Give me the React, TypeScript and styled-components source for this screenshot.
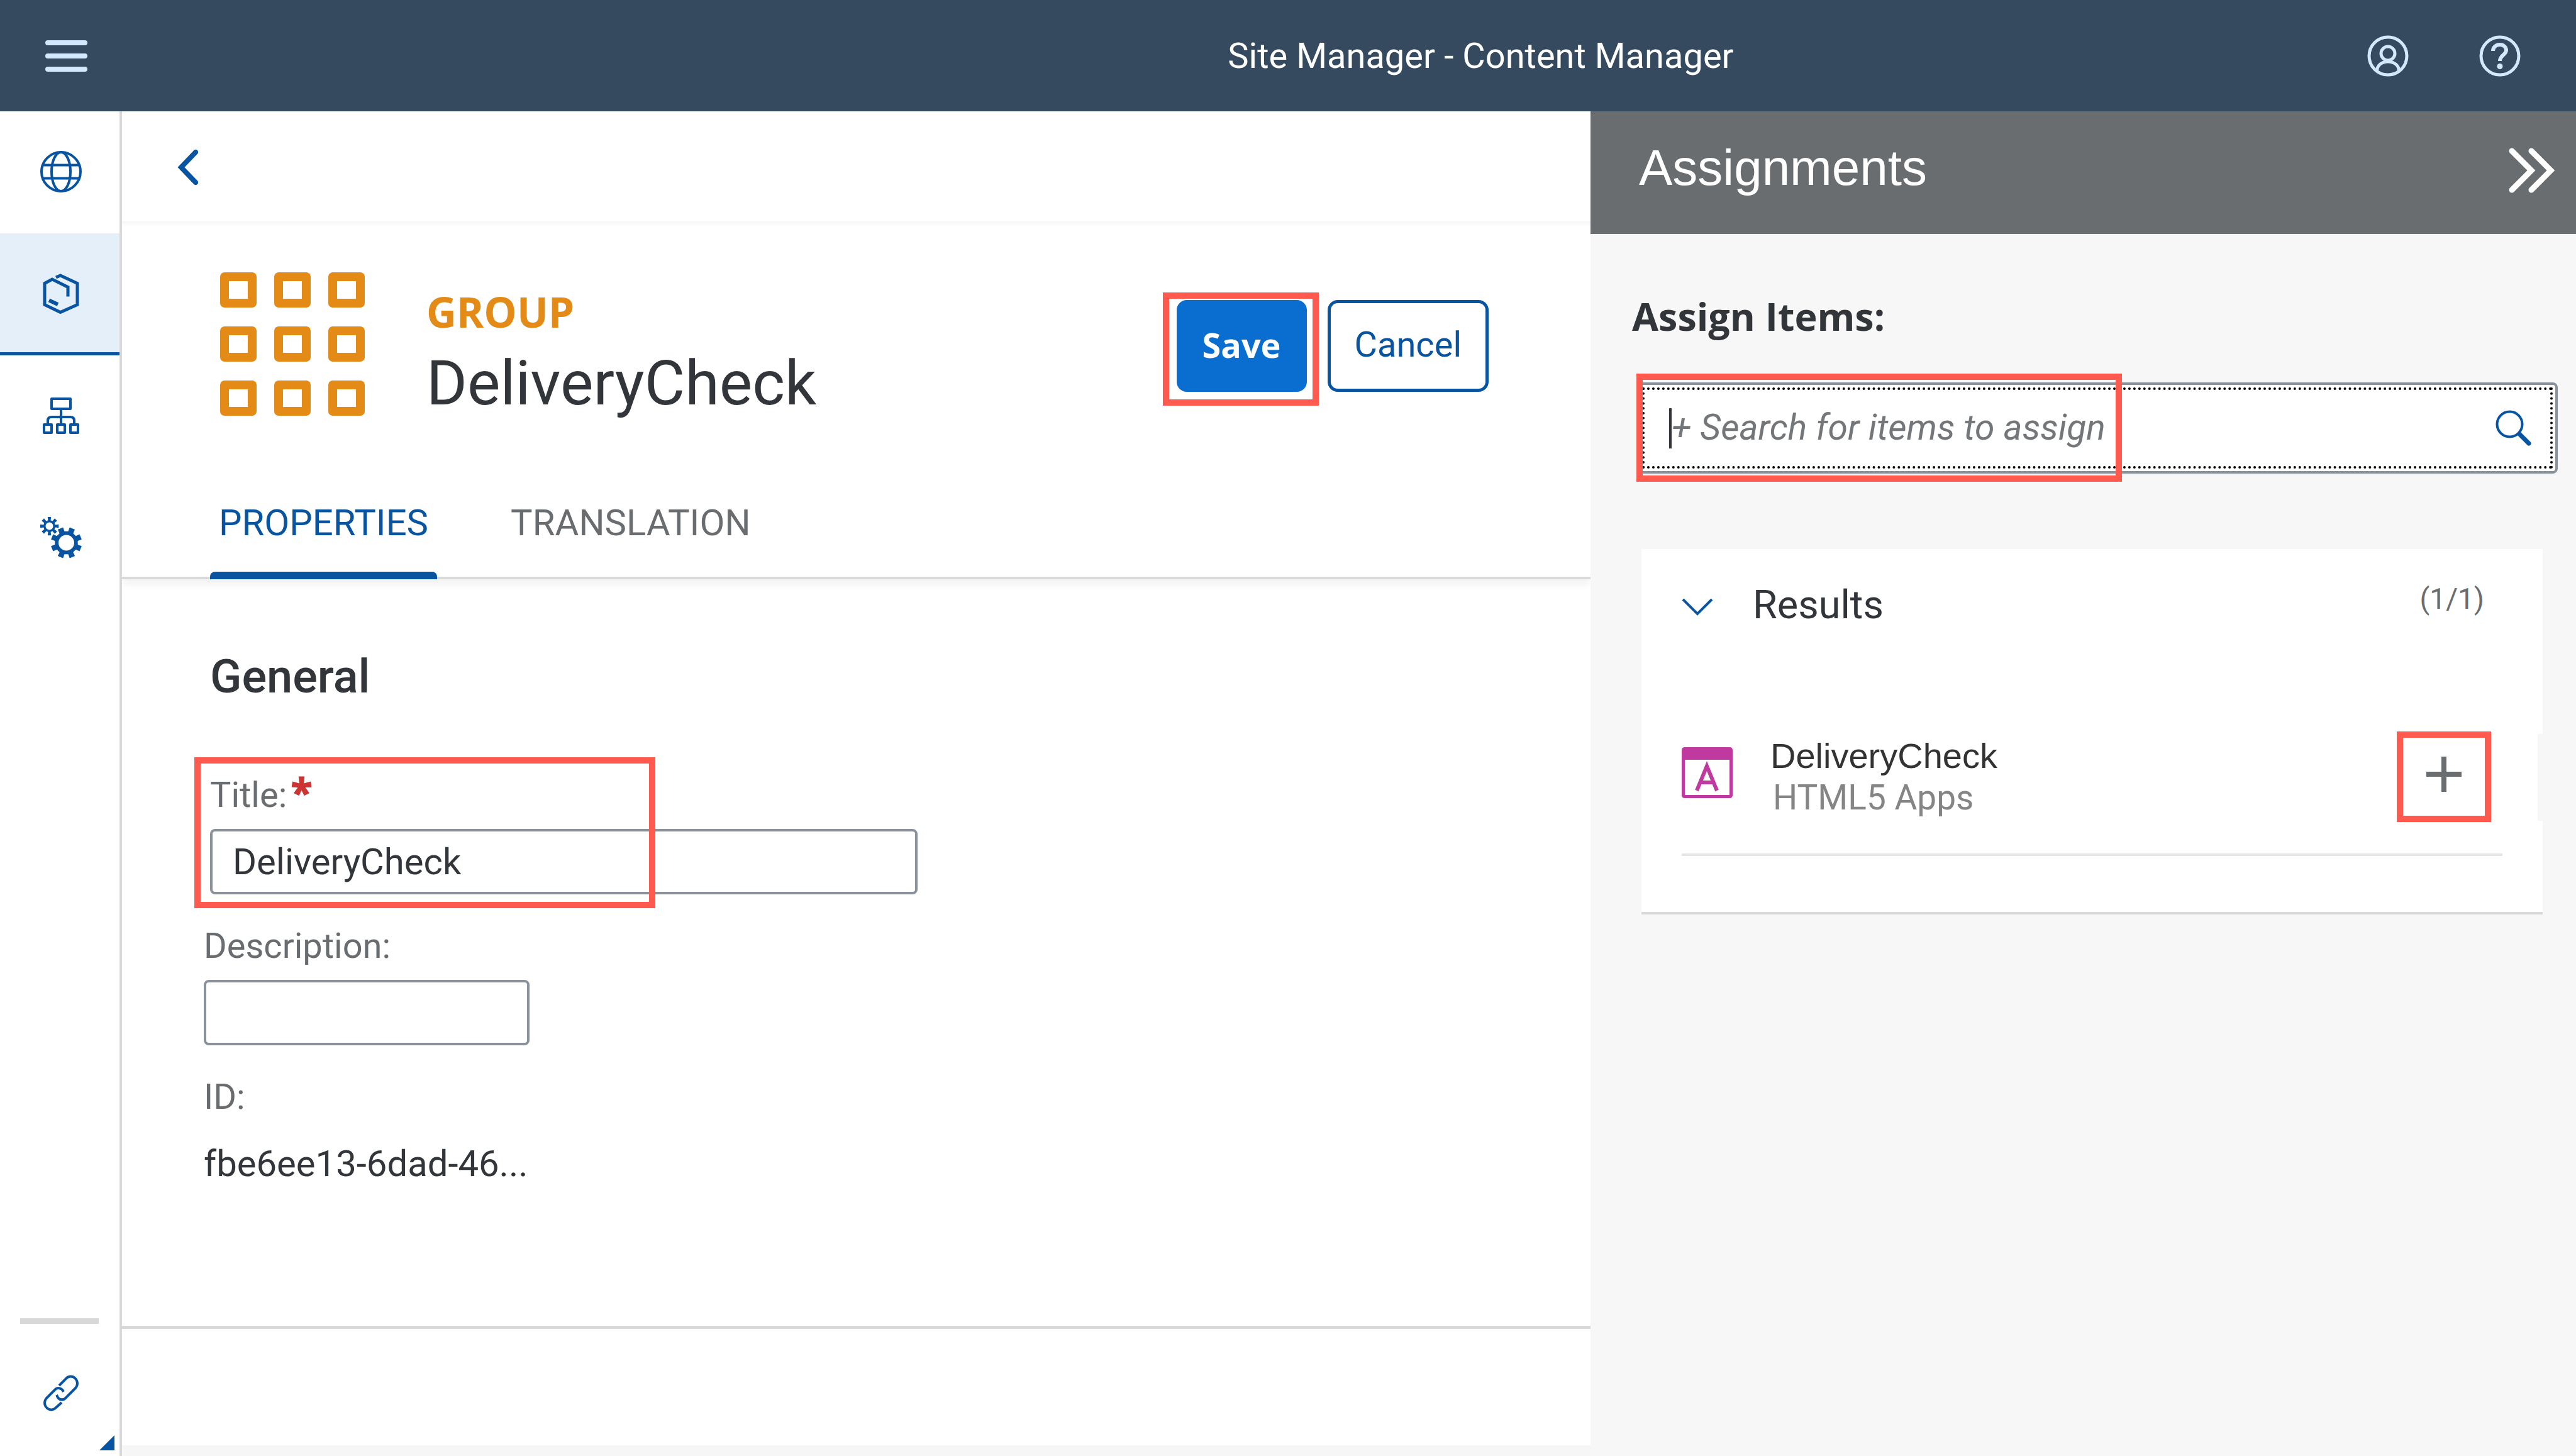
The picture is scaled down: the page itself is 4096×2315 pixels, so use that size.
import React, { useState } from 'react';
import styled, { createGlobalStyle } from 'styled-components';

const sans = 'Roboto, "Liberation Sans", sans-serif';
const sansBold = '"Open Sans", "Noto Sans", sans-serif';
const arial = '"Liberation Sans", Arial, sans-serif';
const blue = '#0854a0';
const ink = '#32363a';
const muted = '#6a6d70';
const line = '#d9d9d9';
const panel = '#f7f7f7';

const GlobalStyle = createGlobalStyle`
  *, *::before, *::after { box-sizing: border-box; }
  body { margin: 0; background: #fff; color: ${ink}; font-family: ${sans}; }
  button, input { font-family: inherit; }
  h1, h2, h3, p { margin: 0; font-weight: 400; }
`;

const Page = styled.div`
  display: flex;
  flex-direction: column;
  min-height: 100vh;
`;

const IconButton = styled.button`
  display: flex;
  align-items: center;
  justify-content: center;
  padding: 0;
  border: 0;
  background: transparent;
  color: inherit;
  cursor: pointer;
`;

const Icon = styled.svg`
  display: block;
  flex: none;
  fill: none;
  stroke: currentColor;
`;

const ShellBar = styled.header`
  display: flex;
  align-items: center;
  height: 177px;
  padding: 0 88px 0 72px;
  background: #354a5f;
  color: #d1e8ff;
`;

const Spacer = styled.div<{ $grow: number }>`
  flex: ${(p) => p.$grow} 1 0;
`;

const ShellTitle = styled.h1`
  color: #fff;
  font-size: 56px;
  line-height: 72px;
  white-space: nowrap;
`;

const ShellActions = styled.div`
  display: flex;
  gap: 112px;
`;

const Body = styled.div`
  display: grid;
  flex: 1;
  grid-template-columns: 194px minmax(0, 2335fr) minmax(0, 1567fr);
`;

const SideNav = styled.nav`
  position: relative;
  display: flex;
  flex-direction: column;
  border-right: 4px solid ${line};
  background: #fff;
`;

const NavItem = styled.a<{ $active?: boolean }>`
  display: flex;
  align-items: center;
  justify-content: center;
  height: 194px;
  padding: 0 0 2px 4px;
  background: ${(p) => (p.$active ? '#e4eff9' : 'transparent')};
  box-shadow: ${(p) => (p.$active ? `inset 0 -5px ${blue}` : 'none')};
  color: ${blue};
`;

const NavFoot = styled.div`
  display: flex;
  flex-direction: column;
  margin-top: auto;
  padding-bottom: 2px;
`;

const NavRule = styled.hr`
  width: 125px;
  height: 9px;
  margin: 0 auto 14px 32px;
  border: 0;
  background: #d8d8d8;
`;

const ResizeCorner = styled.svg`
  position: absolute;
  right: 8px;
  bottom: 9px;
`;

const Main = styled.main`
  display: flex;
  flex-direction: column;
  background: #fff;
`;

const BackBar = styled.div`
  display: flex;
  align-items: center;
  height: 175px;
  padding: 2px 0 0 88px;
  color: ${blue};
`;

const ObjectHeader = styled.section`
  display: flex;
  flex-direction: column;
  height: 569px;
  padding-top: 81px;
  border-bottom: 4px solid ${line};
  box-shadow: inset 0 8px 8px -6px #f2f2f2, 0 8px 12px #f2f2f2;
`;

const ObjectRow = styled.div`
  display: flex;
  align-items: flex-start;
  gap: 98px;
  padding: 0 162px 0 156px;
`;

const ObjectText = styled.div`
  flex: 1;
  padding-top: 22px;
`;

const ObjectType = styled.p`
  color: #e38b16;
  font: 700 66px/80px ${sansBold};
`;

const ObjectTitle = styled.h2`
  margin-top: 14px;
  font-size: 99px;
  line-height: 120px;
`;

const Actions = styled.div`
  display: flex;
  gap: 33px;
  padding-top: 44px;
`;

const Marked = styled.div`
  position: relative;
`;

const Mark = styled.span<{ $top: number; $right?: number; $bottom: number; $left: number; $width?: number }>`
  position: absolute;
  z-index: 1;
  top: -${(p) => p.$top}px;
  right: ${(p) => (p.$width ? 'auto' : `-${p.$right}px`)};
  bottom: -${(p) => p.$bottom}px;
  left: -${(p) => p.$left}px;
  width: ${(p) => (p.$width ? `${p.$width}px` : 'auto')};
  border: 10px solid #ff5a4d;
  pointer-events: none;
`;

const Button = styled.button<{ $primary?: boolean }>`
  height: 146px;
  padding: 0 ${(p) => (p.$primary ? 36 : 38)}px 4px;
  border: 5px solid ${(p) => (p.$primary ? '#0a6ed1' : blue)};
  border-radius: 16px;
  background: ${(p) => (p.$primary ? '#0a6ed1' : '#fff')};
  color: ${(p) => (p.$primary ? '#fff' : blue)};
  font: ${(p) => (p.$primary ? `700 54px/72px ${sansBold}` : `400 56px/72px ${sans}`)};
  cursor: pointer;
`;

const Tabs = styled.div`
  display: flex;
  gap: 103px;
  margin: auto 0 -4px 140px;
`;

const Tab = styled.button<{ $active?: boolean }>`
  padding: 0 14px 42px;
  border: 0;
  background: transparent;
  color: ${(p) => (p.$active ? blue : muted)};
  font-size: 58px;
  line-height: 72px;
  cursor: pointer;

  &::after {
    content: '';
    display: block;
    height: 12px;
    margin: 42px -14px -42px;
    border-radius: 8px 8px 0 0;
    background: ${(p) => (p.$active ? blue : 'transparent')};
  }
`;

const Form = styled.form`
  display: flex;
  flex-direction: column;
  gap: 46px;
  padding: 110px 130px 60px;
`;

const SectionTitle = styled.h3`
  margin: 0 0 61px 10px;
  font-size: 74px;
  font-weight: 500;
  line-height: 90px;
`;

const Field = styled.div<{ $gap?: number; $indent?: boolean }>`
  position: relative;
  display: flex;
  flex-direction: column;
  align-items: flex-start;
  gap: ${(p) => p.$gap ?? 18}px;
  margin-left: ${(p) => (p.$indent ? '10px' : '0')};
`;

const Label = styled.label`
  color: ${muted};
  font-size: 56px;
  line-height: 72px;
`;

const Required = styled.span`
  margin-left: 6px;
  color: #cc3333;
  font: 800 64px/60px ${sansBold};
`;

const TextInput = styled.input<{ $wide?: boolean }>`
  width: ${(p) => (p.$wide ? '1125px' : '518px')};
  max-width: 100%;
  height: 104px;
  padding: 0 32px;
  border: 4px solid #89919a;
  border-radius: 8px;
  background: #fff;
  color: ${ink};
  font-size: 58px;
  outline: 0;
`;

const Value = styled.output`
  font-size: 58px;
  line-height: 72px;
`;

const Footer = styled.footer`
  height: 207px;
  margin-top: auto;
  border-top: 5px solid ${line};
  border-bottom: 17px solid #f6f6f6;
`;

const Aside = styled.aside`
  background: ${panel};
`;

const AsideHeader = styled.div`
  display: flex;
  align-items: center;
  justify-content: space-between;
  height: 195px;
  padding: 0 34px 8px 77px;
  background: #696d70;
  color: #fff;
`;

const AsideTitle = styled.h2`
  padding-bottom: 8px;
  font: 400 80px/92px ${arial};
`;

const AsideBody = styled.div`
  padding: 91px 29px 60px 66px;
`;

const AssignLabel = styled.label`
  display: block;
  font: 700 61px/80px ${sansBold};
`;

const SearchBox = styled.div`
  position: relative;
  display: flex;
  align-items: center;
  height: 145px;
  margin: 65px 0 0 8px;
  padding: 0 38px 0 47px;
  border: 4px solid #89919a;
  border-radius: 8px;
  background: #fff;
  color: ${blue};

  &::after {
    content: '';
    position: absolute;
    inset: 4px;
    border: 4px dotted #000;
    pointer-events: none;
  }
`;

const Caret = styled.span`
  width: 4px;
  height: 64px;
  background: ${ink};
`;

const SearchInput = styled.input`
  flex: 1;
  min-width: 0;
  height: 100px;
  padding: 0 0 2px;
  border: 0;
  background: transparent;
  color: ${ink};
  font-size: 57px;
  outline: 0;

  &::placeholder {
    color: #74777a;
    font-style: italic;
    opacity: 1;
  }
`;

const Card = styled.section`
  margin: 120px 24px 0 15px;
  padding: 49px 64px 89px;
  border-bottom: 4px solid ${line};
  background: #fff;
`;

const CardHeader = styled.div`
  display: flex;
  align-items: flex-start;
  padding-right: 29px;
`;

const Toggle = styled(IconButton)`
  height: 86px;
  color: ${blue};
`;

const CardTitle = styled.h3`
  flex: 1;
  margin-left: 63px;
  font-size: 63px;
  line-height: 80px;
`;

const Count = styled.span`
  color: ${muted};
  font-size: 46px;
  line-height: 60px;
`;

const Item = styled.div`
  position: relative;
  display: flex;
  align-items: center;
  margin-top: 155px;
  padding-bottom: 50px;
  border-bottom: 4px solid #e5e5e5;

  &::after {
    content: '';
    position: absolute;
    top: 4px;
    right: -64px;
    width: 8px;
    height: 138px;
    background: ${panel};
  }
`;

const ItemIcon = styled(Icon)`
  margin-bottom: 14px;
`;

const ItemText = styled.div`
  flex: 1;
  margin-left: 60px;
`;

const ItemName = styled.p`
  color: #333;
  font: 400 56px/66px ${arial};
`;

const ItemKind = styled.p`
  margin-left: 4px;
  color: #858585;
  font-size: 55px;
  line-height: 66px;
`;

const AddButton = styled(IconButton)`
  width: 150px;
  height: 144px;
  margin-right: 18px;
  padding-bottom: 8px;
  border: 10px solid #ff5a4d;
  color: ${muted};
`;

const gear = (cx: number, cy: number, inner: number, outer: number, phase: number) => {
  const n = 8;
  const w = Math.PI / n;
  const pts: string[] = [];
  for (let i = 0; i < n; i++) {
    const a = i * w * 2 + phase * w;
    [
      [inner, -w * 0.58],
      [outer, -w * 0.46],
      [outer, w * 0.46],
      [inner, w * 0.58],
    ].forEach(([r, d]) => pts.push(`${(cx + r * Math.cos(a + d)).toFixed(1)} ${(cy + r * Math.sin(a + d)).toFixed(1)}`));
  }
  return `M${pts.join('L')}Z`;
};

const ring = (cx: number, cy: number, r: number) =>
  `M${cx - r} ${cy}a${r} ${r} 0 1 0 ${r * 2} 0a${r} ${r} 0 1 0 ${-r * 2} 0Z`;

const MenuIcon = () => (
  <Icon width="67" height="50" viewBox="0 0 67 50" strokeWidth="8" strokeLinecap="round">
    <path d="M4 4h59M4 25h59M4 46h59" />
  </Icon>
);

const UserIcon = () => (
  <Icon width="66" height="66" viewBox="0 0 66 66" strokeWidth="5">
    <circle cx="33" cy="33" r="30" />
    <circle cx="33" cy="29" r="11" />
    <path d="M15.500 57C15.500 48 23 42 33 42S50.500 48 50.500 57" />
  </Icon>
);

const HelpIcon = () => (
  <Icon width="66" height="66" viewBox="0 0 66 66" strokeWidth="5">
    <circle cx="33" cy="33" r="30" />
    <path d="M22 25c0-6 5-10 11-10s10 4 10 9c0 7-10 8-10 17" strokeWidth="6" />
    <circle cx="33" cy="49.500" r="4.500" fill="currentColor" stroke="none" />
  </Icon>
);

const GlobeIcon = () => (
  <Icon width="66" height="66" viewBox="0 0 66 66" strokeWidth="4">
    <circle cx="33" cy="33" r="31" />
    <ellipse cx="33" cy="33" rx="15" ry="31" />
    <path d="M4 22.500h58M4 43.500h58" />
  </Icon>
);

const BoxIcon = () => (
  <Icon width="58" height="64" viewBox="0 0 58 64" strokeWidth="5">
    <path d="M21 6l7-3 27 12.500v34L28 61.500 3 49.500v-34L15 9l25 12.500v15" />
    <path d="M10 42.500l14 6.500" strokeWidth="6" />
  </Icon>
);

const HierarchyIcon = () => (
  <Icon width="58" height="58" viewBox="0 0 58 58" strokeWidth="4" strokeLinejoin="round">
    <rect x="14" y="2" width="30" height="16" />
    <path d="M29 18v24M8 42v-5q0-6 6-6h30q6 0 6 6v5" />
    <rect x="2" y="43" width="12" height="13" />
    <rect x="23" y="43" width="12" height="13" />
    <rect x="44" y="43" width="12" height="13" />
  </Icon>
);

const GearsIcon = () => (
  <Icon width="66" height="66" viewBox="0 0 66 66">
    <g fill="currentColor" stroke="none" fillRule="evenodd">
      <path d={gear(14.5, 14.5, 9.5, 15, 0) + ring(14.5, 14.5, 6)} />
      <path d={gear(41.5, 41, 18.5, 25, 1) + ring(41.5, 41, 12.5)} />
    </g>
  </Icon>
);

const LinkIcon = () => (
  <Icon width="58" height="58" viewBox="0 0 58 58" strokeWidth="4">
    <path d="M26 17L37 6a10 10 0 0 1 15 0a11 11 0 0 1 0 15L37 36a8 8 0 0 1-13 0l-2-4" />
    <path d="M33 27l-1-2a8 8 0 0 0-13-1L6 37a11 11 0 0 0 0 15a10 10 0 0 0 15 0L30 44" />
  </Icon>
);

const BackIcon = () => (
  <Icon width="33" height="58" viewBox="0 0 33 58" strokeWidth="8" strokeLinecap="round">
    <path d="M29 5L6 29l23 24" />
  </Icon>
);

const GroupIcon = () => (
  <Icon width="230" height="228" viewBox="0 0 230 228">
    <g stroke="#e38b16" strokeWidth="14" strokeLinejoin="round">
      {[0, 86, 172].flatMap((y) =>
        [0, 86, 172].map((x) => <rect key={`${x}-${y}`} x={x + 7} y={y + 7} width="44" height="42" />),
      )}
    </g>
  </Icon>
);

const CollapseIcon = () => (
  <Icon width="74" height="72" viewBox="0 0 74 72" strokeWidth="9" strokeLinecap="round">
    <path d="M6 5l31 31L6 67M37 5l31 31-31 31" />
  </Icon>
);

const SearchIcon = () => (
  <Icon width="57" height="57" viewBox="0 0 57 57" strokeWidth="4">
    <circle cx="22.500" cy="22.500" r="20" />
    <path d="M38 38l15 15" strokeWidth="7" strokeLinecap="round" />
  </Icon>
);

const ChevronIcon = () => (
  <Icon width="50" height="28" viewBox="0 0 50 28" strokeWidth="4">
    <path d="M2 2l23 23L48 2" />
  </Icon>
);

const AppIcon = () => (
  <ItemIcon width="81" height="81" viewBox="0 0 81 81" color="#c0399f">
    <rect x="2.500" y="2.500" width="76" height="76" rx="2" strokeWidth="5" />
    <path d="M2 2h77v18H2z" fill="currentColor" stroke="none" />
    <path d="M24 69l16-39 16 39M30 56h20" strokeWidth="6" />
  </ItemIcon>
);

const PlusIcon = () => (
  <Icon width="58" height="58" viewBox="0 0 58 58" strokeWidth="8">
    <path d="M29 1v56M1 29h56" />
  </Icon>
);

export default function App() {
  const [title, setTitle] = useState('DeliveryCheck');
  const [description, setDescription] = useState('');
  const [query, setQuery] = useState('');

  return (
    <Page>
      <GlobalStyle />
      <ShellBar>
        <IconButton type="button" aria-label="Menu">
          <MenuIcon />
        </IconButton>
        <Spacer $grow={9} />
        <ShellTitle>Site Manager - Content Manager</ShellTitle>
        <Spacer $grow={5} />
        <ShellActions>
          <IconButton type="button" aria-label="Account">
            <UserIcon />
          </IconButton>
          <IconButton type="button" aria-label="Help">
            <HelpIcon />
          </IconButton>
        </ShellActions>
      </ShellBar>
      <Body>
        <SideNav>
          <NavItem href="#sites" aria-label="Site Directory">
            <GlobeIcon />
          </NavItem>
          <NavItem href="#content" aria-label="Content Manager" $active>
            <BoxIcon />
          </NavItem>
          <NavItem href="#providers" aria-label="Provider Manager">
            <HierarchyIcon />
          </NavItem>
          <NavItem href="#settings" aria-label="Settings">
            <GearsIcon />
          </NavItem>
          <NavFoot>
            <NavRule />
            <NavItem href="#links" aria-label="Links">
              <LinkIcon />
            </NavItem>
          </NavFoot>
          <ResizeCorner width="24" height="24" viewBox="0 0 24 24">
            <path d="M24 0v24H0z" fill={blue} />
          </ResizeCorner>
        </SideNav>
        <Main>
          <BackBar>
            <IconButton type="button" aria-label="Back">
              <BackIcon />
            </IconButton>
          </BackBar>
          <ObjectHeader>
            <ObjectRow>
              <GroupIcon />
              <ObjectText>
                <ObjectType>GROUP</ObjectType>
                <ObjectTitle>DeliveryCheck</ObjectTitle>
              </ObjectText>
              <Actions>
                <Marked>
                  <Button type="submit" form="group-form" $primary>
                    Save
                  </Button>
                  <Mark $top={12} $right={19} $bottom={22} $left={22} />
                </Marked>
                <Button type="button">Cancel</Button>
              </Actions>
            </ObjectRow>
            <Tabs role="tablist">
              <Tab type="button" role="tab" aria-selected="true" $active>
                PROPERTIES
              </Tab>
              <Tab type="button" role="tab" aria-selected="false">
                TRANSLATION
              </Tab>
            </Tabs>
          </ObjectHeader>
          <Form id="group-form" onSubmit={(e) => e.preventDefault()}>
            <SectionTitle>General</SectionTitle>
            <Field $indent>
              <Label htmlFor="title">
                Title:<Required>*</Required>
              </Label>
              <TextInput id="title" $wide value={title} onChange={(e) => setTitle(e.target.value)} />
              <Mark $top={24} $bottom={22} $left={25} $width={733} />
            </Field>
            <Field>
              <Label htmlFor="description">Description:</Label>
              <TextInput id="description" value={description} onChange={(e) => setDescription(e.target.value)} />
            </Field>
            <Field $gap={34}>
              <Label htmlFor="group-id">ID:</Label>
              <Value id="group-id">fbe6ee13-6dad-46...</Value>
            </Field>
          </Form>
          <Footer />
        </Main>
        <Aside>
          <AsideHeader>
            <AsideTitle>Assignments</AsideTitle>
            <IconButton type="button" aria-label="Collapse">
              <CollapseIcon />
            </IconButton>
          </AsideHeader>
          <AsideBody>
            <AssignLabel htmlFor="assign">Assign Items:</AssignLabel>
            <SearchBox>
              <Caret />
              <SearchInput
                id="assign"
                placeholder="+ Search for items to assign"
                value={query}
                onChange={(e) => setQuery(e.target.value)}
              />
              <IconButton type="button" aria-label="Search">
                <SearchIcon />
              </IconButton>
              <Mark $top={18} $bottom={17} $left={5} $width={772} />
            </SearchBox>
            <Card>
              <CardHeader>
                <Toggle type="button" aria-label="Toggle results">
                  <ChevronIcon />
                </Toggle>
                <CardTitle>Results</CardTitle>
                <Count>(1/1)</Count>
              </CardHeader>
              <Item>
                <AppIcon />
                <ItemText>
                  <ItemName>DeliveryCheck</ItemName>
                  <ItemKind>HTML5 Apps</ItemKind>
                </ItemText>
                <AddButton type="button" aria-label="Assign DeliveryCheck">
                  <PlusIcon />
                </AddButton>
              </Item>
            </Card>
          </AsideBody>
        </Aside>
      </Body>
    </Page>
  );
}
